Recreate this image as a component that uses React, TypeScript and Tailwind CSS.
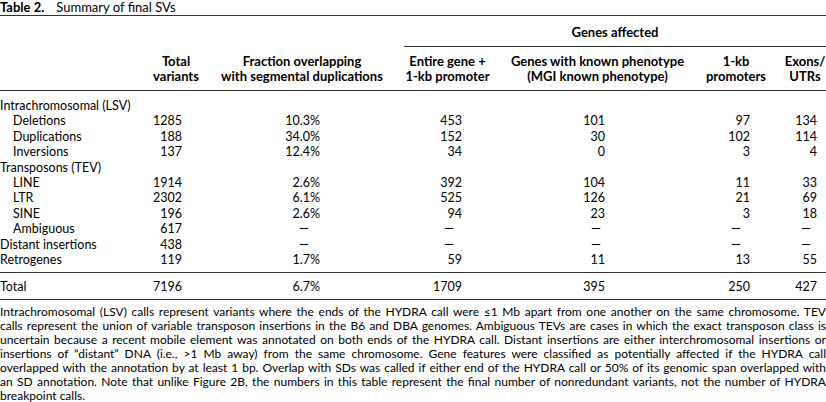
import React from "react"

type Row = {
  label: string
  indent?: boolean
  cells?: string[]
}

const COLS = "grid grid-cols-[140px_70px_190px_95px_205px_72px_54px]"

// right padding per column, for numbers and for dashes
const NUM_PAD = ["", "pr-[28px]", "pr-[80px]", "pr-[33px]", "pr-[95px]", "pr-[22px]", "pr-[9px]"]
const DASH_PAD = ["", "pr-[28px]", "pr-[91px]", "pr-[41px]", "pr-[99px]", "pr-[31px]", "pr-[15px]"]

const ROWS: Row[] = [
  { label: "Intrachromosomal (LSV)" },
  { label: "Deletions", indent: true, cells: ["1285", "10.3%", "453", "101", "97", "134"] },
  { label: "Duplications", indent: true, cells: ["188", "34.0%", "152", "30", "102", "114"] },
  { label: "Inversions", indent: true, cells: ["137", "12.4%", "34", "0", "3", "4"] },
  { label: "Transposons (TEV)" },
  { label: "LINE", indent: true, cells: ["1914", "2.6%", "392", "104", "11", "33"] },
  { label: "LTR", indent: true, cells: ["2302", "6.1%", "525", "126", "21", "69"] },
  { label: "SINE", indent: true, cells: ["196", "2.6%", "94", "23", "3", "18"] },
  { label: "Ambiguous", indent: true, cells: ["617", "—", "—", "—", "—", "—"] },
  { label: "Distant insertions", cells: ["438", "—", "—", "—", "—", "—"] },
  { label: "Retrogenes", cells: ["119", "1.7%", "59", "11", "13", "55"] },
]

const TOTAL = ["7196", "6.7%", "1709", "395", "250", "427"]

// footnote lines, broken where the printed table breaks them
const NOTE = [
  "Intrachromosomal (LSV) calls represent variants where the ends of the HYDRA call were ≤1 Mb apart from one another on the same chromosome. TEV",
  "calls represent the union of variable transposon insertions in the B6 and DBA genomes. Ambiguous TEVs are cases in which the exact transposon class is",
  "uncertain because a recent mobile element was annotated on both ends of the HYDRA call. Distant insertions are either interchromosomal insertions or",
  "insertions of “distant” DNA (i.e., >1 Mb away) from the same chromosome. Gene features were classified as potentially affected if the HYDRA call",
  "overlapped with the annotation by at least 1 bp. Overlap with SDs was called if either end of the HYDRA call or 50% of its genomic span overlapped with",
  "an SD annotation. Note that unlike Figure 2B, the numbers in this table represent the final number of nonredundant variants, not the number of HYDRA",
  "breakpoint calls.",
]

function DataRow({ row }: { row: Row }) {
  return (
    <div className={`${COLS} h-[15.4px] leading-[15.4px]`}>
      <div className={row.indent ? "pl-[13px]" : ""}>{row.label}</div>
      {row.cells?.map((value, i) => (
        <div
          key={i}
          className={`text-right ${value === "—" ? DASH_PAD[i + 1] : NUM_PAD[i + 1]}`}
        >
          {value}
        </div>
      ))}
    </div>
  )
}

export default function App() {
  return (
    <div className="w-[826px] bg-white font-['Lato',sans-serif] text-[12.5px] text-black">
      <div className="flex h-[16px] items-center gap-[12px] border-b border-[#333] pb-[1px] text-[13px] leading-[15px]">
        <span className="font-bold">Table 2.</span>
        <span>Summary of final SVs</span>
      </div>

      {/* column headers */}
      <div className={`${COLS} text-[13px]`}>
        <div className="col-span-3" />
        <div className="col-span-4 ml-[4px] border-b border-[#333] pb-[6px] pt-[8px] text-center font-bold leading-[16px]">
          Genes affected
        </div>
      </div>
      <div className={`${COLS} border-b border-[#333] pb-[6px] pt-[7px] text-[13px] font-bold leading-[15px]`}>
        <div />
        <div className="pl-[2px] text-center">
          Total
          <br />
          variants
        </div>
        <div className="pr-[6px] text-center">
          Fraction overlapping
          <br />
          with segmental duplications
        </div>
        <div className="text-center">
          Entire gene +
          <br />
          1-kb promoter
        </div>
        <div className="text-center">
          Genes with known phenotype
          <br />
          (MGI known phenotype)
        </div>
        <div className="text-center">
          1-kb
          <br />
          promoters
        </div>
        <div className="pl-[12px] text-center">
          Exons/
          <br />
          UTRs
        </div>
      </div>

      <div className="border-b border-[#333] pb-[5px] pt-[7px]">
        {ROWS.map((row) => (
          <DataRow key={row.label} row={row} />
        ))}
      </div>

      <div className="border-b border-[#333] pb-[4px] pt-[6px]">
        <DataRow row={{ label: "Total", cells: TOTAL }} />
      </div>

      <div className="pt-[5px] text-[12px] leading-[14px]">
        {NOTE.map((line, i) => (
          <p
            key={i}
            className={i < NOTE.length - 1 ? "text-justify [text-align-last:justify]" : "text-left"}
          >
            {line}
          </p>
        ))}
      </div>
    </div>
  )
}
